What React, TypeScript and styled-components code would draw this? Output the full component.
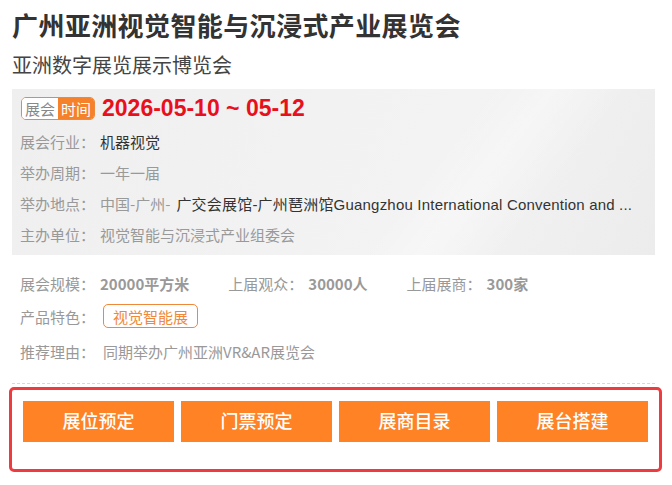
import React from "react";
import styled, { createGlobalStyle } from "styled-components";

const GlobalStyle = createGlobalStyle`
  html, body { margin: 0; padding: 0; background: #ffffff; }
  body { font-family: "Noto Sans CJK SC", "Noto Sans", sans-serif; }
  * { box-sizing: border-box; }
`;

const Page = styled.div`
  width: 672px;
  padding: 7px 17px 0 12px;
`;

const Title = styled.h1`
  margin: 0;
  font-size: 26px;
  line-height: 36px;
  font-weight: 700;
  color: #333333;
  letter-spacing: 0.4px;
`;

const Subtitle = styled.h2`
  margin: 7px 0 0;
  font-size: 20px;
  line-height: 30px;
  font-weight: 400;
  color: #444444;
`;

const Panel = styled.div`
  margin-top: 9px;
  height: 166px;
  padding: 8px 8px 5px;
  background:
    linear-gradient(128deg, rgba(255,255,255,0) 0%, rgba(255,255,255,0) 62%, rgba(255,255,255,0.35) 70%, rgba(255,255,255,0) 80%),
    linear-gradient(115deg, #efefef 0%, #f2f2f2 45%, #f3f3f3 65%, #ececec 100%);
`;

const DateRow = styled.div`
  display: flex;
  align-items: center;
  gap: 7px;
  height: 23px;
  margin-bottom: 6px;
  padding-left: 1px;
`;

const Badge = styled.div`
  display: flex;
  height: 23px;
  border: 1px solid #f0883a;
  border-radius: 5px;
  overflow: hidden;
  font-size: 15px;
  line-height: 21px;
`;

const BadgePart = styled.span<{ $filled?: boolean }>`
  padding: 0 3px;
  background: ${(p) => (p.$filled ? "#f5822a" : "#ffffff")};
  color: ${(p) => (p.$filled ? "#ffffff" : "#888888")};
`;

const DateText = styled.span`
  font-family: "Liberation Sans", Arial, sans-serif;
  font-weight: 700;
  font-size: 23px;
  line-height: 23px;
  color: #e8101c;
`;

const InfoRow = styled.div`
  display: flex;
  align-items: center;
  height: 31px;
  font-size: 15px;
  white-space: nowrap;
  overflow: hidden;
`;

const Label = styled.span<{ $width?: number }>`
  flex: none;
  width: ${(p) => (p.$width ? `${p.$width}px` : "auto")};
  color: #999999;
`;

const Value = styled.span<{ $tone?: "dark" | "grey"; $bold?: boolean; $latin?: boolean }>`
  color: ${(p) => (p.$tone === "dark" ? "#333333" : "#999999")};
  font-weight: ${(p) => (p.$bold ? 700 : 400)};
  font-family: ${(p) =>
    p.$latin
      ? `"Liberation Sans", "Noto Sans CJK SC", sans-serif`
      : `"Noto Sans CJK SC", "Noto Sans", sans-serif`};
  letter-spacing: ${(p) => (p.$latin ? "0.2px" : "0")};
  margin-left: ${(p) => (p.$latin ? "6px" : "0")};
`;

const Details = styled.div`
  padding: 13px 0 0 8px;
`;

const StatRow = styled.div`
  display: flex;
  align-items: center;
  height: 30px;
  font-size: 15px;
  white-space: nowrap;
`;

const Stat = styled.div`
  display: flex;
  align-items: center;
  gap: 5px;
  margin-right: 39px;
`;

const TagRow = styled.div`
  display: flex;
  align-items: center;
  gap: 8px;
  height: 36px;
  font-size: 15px;
`;

const Tag = styled.span`
  display: inline-flex;
  align-items: center;
  height: 24px;
  padding: 0 9px;
  border: 1px solid #f0883a;
  border-radius: 5px;
  color: #f0883a;
  font-size: 15px;
`;

const ReasonRow = styled.div`
  display: flex;
  align-items: center;
  gap: 8px;
  height: 30px;
  margin-top: 2px;
  font-size: 15px;
`;

const Dashed = styled.div`
  margin-top: 17px;
  border-top: 1px dashed #d8d8d8;
`;

const ActionBox = styled.div`
  margin: 3px 0 0 -3px;
  width: 653px;
  height: 85px;
  border: 3px solid #ee3b3f;
  border-radius: 5px;
  padding: 11px 11px 0;
  display: grid;
  grid-template-columns: repeat(4, 1fr);
  column-gap: 7px;
  align-content: start;
`;

const ActionButton = styled.button`
  height: 41px;
  border: none;
  background: #ff8224;
  color: #ffffff;
  font-family: "Noto Sans CJK SC", "Noto Sans", sans-serif;
  font-size: 18px;
  font-weight: 500;
  cursor: pointer;
  padding: 0 0 3px;
`;

export default function App() {
  const actions = ["展位预定", "门票预定", "展商目录", "展台搭建"];
  return (
    <>
      <GlobalStyle />
      <Page>
        <Title>广州亚洲视觉智能与沉浸式产业展览会</Title>
        <Subtitle>亚洲数字展览展示博览会</Subtitle>
        <Panel>
          <DateRow>
            <Badge>
              <BadgePart>展会</BadgePart>
              <BadgePart $filled>时间</BadgePart>
            </Badge>
            <DateText>2026-05-10 ~ 05-12</DateText>
          </DateRow>
          <InfoRow>
            <Label $width={80}>展会行业：</Label>
            <Value $tone="dark">机器视觉</Value>
          </InfoRow>
          <InfoRow>
            <Label $width={80}>举办周期：</Label>
            <Value>一年一届</Value>
          </InfoRow>
          <InfoRow>
            <Label $width={80}>举办地点：</Label>
            <Value>中国-广州-</Value>
            <Value $tone="dark" $latin>
              广交会展馆-广州琶洲馆Guangzhou International Convention and ...
            </Value>
          </InfoRow>
          <InfoRow>
            <Label $width={80}>主办单位：</Label>
            <Value>视觉智能与沉浸式产业组委会</Value>
          </InfoRow>
        </Panel>
        <Details>
          <StatRow>
            <Stat>
              <Label>展会规模：</Label>
              <Value $bold>20000平方米</Value>
            </Stat>
            <Stat>
              <Label>上届观众：</Label>
              <Value $bold>30000人</Value>
            </Stat>
            <Stat>
              <Label>上届展商：</Label>
              <Value $bold>300家</Value>
            </Stat>
          </StatRow>
          <TagRow>
            <Label>产品特色：</Label>
            <Tag>视觉智能展</Tag>
          </TagRow>
          <ReasonRow>
            <Label>推荐理由：</Label>
            <Value>同期举办广州亚洲VR&amp;AR展览会</Value>
          </ReasonRow>
        </Details>
        <Dashed />
        <ActionBox>
          {actions.map((a) => (
            <ActionButton key={a}>{a}</ActionButton>
          ))}
        </ActionBox>
      </Page>
    </>
  );
}
